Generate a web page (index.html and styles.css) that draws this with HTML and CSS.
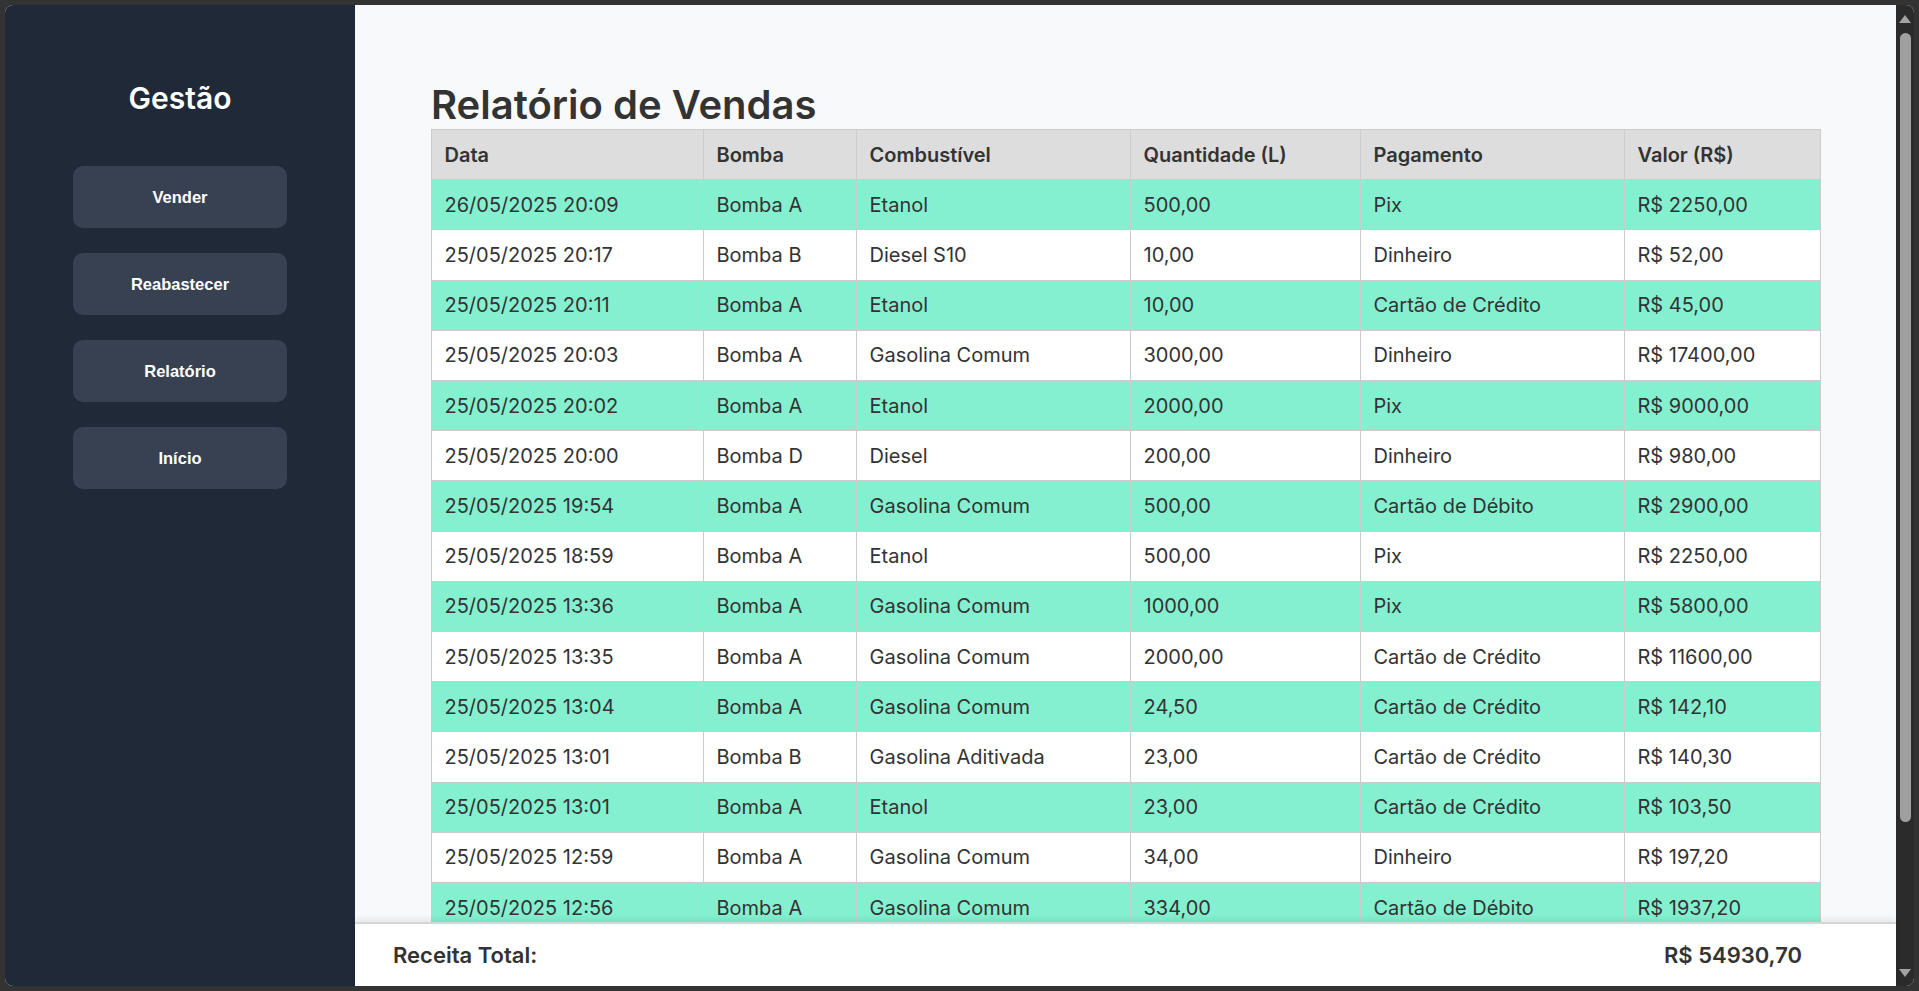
FILE: index.html
```html
<!DOCTYPE html>
<html lang="pt-BR">
<head>
<meta charset="utf-8">
<title>Relatório de Vendas</title>
<link rel="stylesheet" href="styles.css">
</head>
<body>
<div class="window">
  <aside class="sidebar">
    <h2 class="brand">Gestão</h2>
    <nav class="nav">
      <button class="nav-btn">Vender</button>
      <button class="nav-btn">Reabastecer</button>
      <button class="nav-btn">Relatório</button>
      <button class="nav-btn">Início</button>
    </nav>
  </aside>
  <main class="main">
    <section class="content">
      <h1 class="title">Relatório de Vendas</h1>
      <table class="report">
        <colgroup>
          <col class="c-data"><col class="c-bomba"><col class="c-comb"><col class="c-qtd"><col class="c-pag"><col class="c-valor">
        </colgroup>
        <thead>
          <tr><th>Data</th><th>Bomba</th><th>Combustível</th><th>Quantidade (L)</th><th>Pagamento</th><th>Valor (R$)</th></tr>
        </thead>
        <tbody>
          <tr><td>26/05/2025 20:09</td><td>Bomba A</td><td>Etanol</td><td>500,00</td><td>Pix</td><td>R$ 2250,00</td></tr>
          <tr><td>25/05/2025 20:17</td><td>Bomba B</td><td>Diesel S10</td><td>10,00</td><td>Dinheiro</td><td>R$ 52,00</td></tr>
          <tr><td>25/05/2025 20:11</td><td>Bomba A</td><td>Etanol</td><td>10,00</td><td>Cartão de Crédito</td><td>R$ 45,00</td></tr>
          <tr><td>25/05/2025 20:03</td><td>Bomba A</td><td>Gasolina Comum</td><td>3000,00</td><td>Dinheiro</td><td>R$ 17400,00</td></tr>
          <tr><td>25/05/2025 20:02</td><td>Bomba A</td><td>Etanol</td><td>2000,00</td><td>Pix</td><td>R$ 9000,00</td></tr>
          <tr><td>25/05/2025 20:00</td><td>Bomba D</td><td>Diesel</td><td>200,00</td><td>Dinheiro</td><td>R$ 980,00</td></tr>
          <tr><td>25/05/2025 19:54</td><td>Bomba A</td><td>Gasolina Comum</td><td>500,00</td><td>Cartão de Débito</td><td>R$ 2900,00</td></tr>
          <tr><td>25/05/2025 18:59</td><td>Bomba A</td><td>Etanol</td><td>500,00</td><td>Pix</td><td>R$ 2250,00</td></tr>
          <tr><td>25/05/2025 13:36</td><td>Bomba A</td><td>Gasolina Comum</td><td>1000,00</td><td>Pix</td><td>R$ 5800,00</td></tr>
          <tr><td>25/05/2025 13:35</td><td>Bomba A</td><td>Gasolina Comum</td><td>2000,00</td><td>Cartão de Crédito</td><td>R$ 11600,00</td></tr>
          <tr><td>25/05/2025 13:04</td><td>Bomba A</td><td>Gasolina Comum</td><td>24,50</td><td>Cartão de Crédito</td><td>R$ 142,10</td></tr>
          <tr><td>25/05/2025 13:01</td><td>Bomba B</td><td>Gasolina Aditivada</td><td>23,00</td><td>Cartão de Crédito</td><td>R$ 140,30</td></tr>
          <tr><td>25/05/2025 13:01</td><td>Bomba A</td><td>Etanol</td><td>23,00</td><td>Cartão de Crédito</td><td>R$ 103,50</td></tr>
          <tr><td>25/05/2025 12:59</td><td>Bomba A</td><td>Gasolina Comum</td><td>34,00</td><td>Dinheiro</td><td>R$ 197,20</td></tr>
          <tr><td>25/05/2025 12:56</td><td>Bomba A</td><td>Gasolina Comum</td><td>334,00</td><td>Cartão de Débito</td><td>R$ 1937,20</td></tr>
        </tbody>
      </table>
    </section>
    <footer class="footer">
      <span class="total-label">Receita Total:</span>
      <span class="total-value">R$ 54930,70</span>
    </footer>
  </main>
  <div class="scrollbar" aria-hidden="true">
    <span class="arrow arrow-up"></span>
    <span class="thumb"></span>
    <span class="arrow arrow-down"></span>
  </div>
</div>
</body>
</html>
```
FILE: styles.css
```css
* { box-sizing: border-box; }

html, body {
  margin: 0;
  height: 991px;
  overflow: hidden;
}

body {
  background: #333333;
  padding: 5px;
  font-family: Inter, "Noto Sans", sans-serif;
}

.window {
  display: flex;
  height: 981px;
  border-radius: 8px;
  overflow: hidden;
  background: #f8f9fb;
}

/* Sidebar */
.sidebar {
  flex: 0 0 350px;
  background: #1f2937;
  color: #fff;
  padding-top: 75px;
  display: flex;
  flex-direction: column;
  align-items: center;
}

.brand {
  margin: 0;
  font-size: 30px;
  font-weight: 600;
  line-height: 36px;
  color: #ffffff;
}

.nav {
  margin-top: 50px;
  display: flex;
  flex-direction: column;
  gap: 25px;
}

.nav-btn {
  width: 214px;
  height: 62px;
  border: none;
  border-radius: 10px;
  background: #374151;
  color: #ffffff;
  font-family: "Liberation Sans", Arial, sans-serif;
  font-weight: 700;
  font-size: 16.5px;
  padding: 0;
}

/* Main */
.main {
  flex: 1 1 auto;
  min-width: 0;
  display: flex;
  flex-direction: column;
  background: #f8f9fb;
}

.content {
  flex: 1 1 auto;
  min-height: 0;
  overflow: hidden;
  padding: 76px 76px 0 76px;
}

.title {
  margin: 0;
  font-size: 40px;
  line-height: 48px;
  font-weight: 600;
  color: #333333;
}

.report {
  width: 1389px;
  border-collapse: collapse;
  table-layout: fixed;
  border: 1px solid #cccccc;
  color: #333333;
  font-size: 20px;
}

.c-data { width: 272px; }
.c-bomba { width: 153px; }
.c-comb { width: 274px; }
.c-qtd { width: 230px; }
.c-pag { width: 264px; }
.c-valor { width: 196px; }

.report th,
.report td {
  border: 1px solid #cccccc;
  padding: 12.5px;
  line-height: 24.2px;
  text-align: left;
  white-space: nowrap;
}

.report th {
  background: #dddddd;
  font-weight: 600;
}

.report td {
  font-weight: 400;
}

.report tbody tr:nth-child(odd) td {
  background: #84f0d0;
}

.report tbody tr:nth-child(even) td {
  background: #ffffff;
}

/* Footer */
.footer {
  flex: 0 0 64px;
  position: relative;
  z-index: 1;
  background: #ffffff;
  border-top: 2px solid #d6d6d6;
  box-shadow: 0 -3px 6px rgba(0, 0, 0, 0.08);
  display: flex;
  align-items: center;
  justify-content: space-between;
  padding: 0 94px 0 38px;
  color: #333333;
  font-size: 22px;
  font-weight: 600;
}

/* Scrollbar */
.scrollbar {
  flex: 0 0 18px;
  background: #2b2b2b;
  display: flex;
  flex-direction: column;
  align-items: center;
  padding-top: 10px;
}

.arrow {
  width: 0;
  height: 0;
  border-left: 6px solid transparent;
  border-right: 6px solid transparent;
}

.arrow-up {
  border-bottom: 8px solid #a3a3a3;
}

.arrow-down {
  margin-top: 147px;
  border-top: 8px solid #a3a3a3;
}

.thumb {
  margin-top: 10px;
  width: 11px;
  height: 789px;
  border-radius: 6px;
  background: #9f9f9f;
}
```
